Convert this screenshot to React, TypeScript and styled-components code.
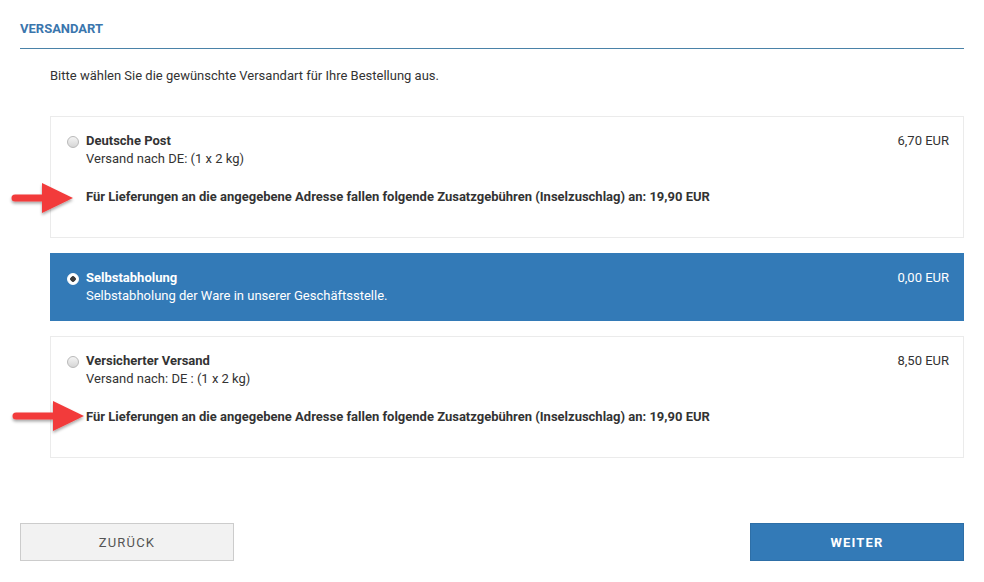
import React, { useState } from 'react';
import styled, { createGlobalStyle } from 'styled-components';

const GlobalStyle = createGlobalStyle`
  body {
    margin: 0;
    background: #fff;
    font-family: Roboto, "Liberation Sans", Arial, sans-serif;
    font-size: 13px;
    color: #333;
  }
`;

const Page = styled.div`
  padding: 20px 20px 0 20px;
  width: 944px;
`;

const Heading = styled.h2`
  margin: 0;
  font-size: 13px;
  font-weight: 700;
  text-transform: uppercase;
  color: #3a76ad;
  line-height: 18px;
  padding-bottom: 10px;
  border-bottom: 1px solid #4a82a8;
`;

const Content = styled.div`
  margin-left: 30px;
  padding-top: 18px;
  position: relative;
`;

const Intro = styled.p`
  margin: 0 0 31px 0;
  line-height: 18px;
`;

interface OptionProps {
  selected?: boolean;
}

const OptionCard = styled.div<OptionProps>`
  display: flex;
  align-items: flex-start;
  padding: 15px 14px ${(p) => (p.selected ? '15px' : '31px')} 16px;
  margin-bottom: 15px;
  background: ${(p) => (p.selected ? '#337ab7' : '#fff')};
  border: 1px solid ${(p) => (p.selected ? '#337ab7' : '#ebebeb')};
  color: ${(p) => (p.selected ? '#fff' : '#333')};
  line-height: 18px;
  cursor: pointer;
`;

const Radio = styled.span<OptionProps>`
  flex: none;
  width: 12px;
  height: 12px;
  margin: 4px 7px 0 0;
  border-radius: 50%;
  box-sizing: border-box;
  border: 1px solid ${(p) => (p.selected ? '#fff' : '#b9b9b9')};
  background: ${(p) =>
    p.selected
      ? 'radial-gradient(circle, #3c3c3c 0 2.5px, #fff 3px)'
      : 'linear-gradient(#f4f4f4, #d6d6d6)'};
`;

const OptionBody = styled.div`
  flex: 1;
`;

const Title = styled.div`
  font-weight: 700;
`;

const Notice = styled.div`
  font-weight: 700;
  margin-top: 20px;
`;

const Price = styled.div`
  flex: none;
`;

// red pointer arrows laid over the option list
const Arrow = styled.svg<{ left: number; top: number }>`
  position: absolute;
  left: ${(p) => p.left}px;
  top: ${(p) => p.top}px;
  overflow: visible;
  pointer-events: none;
`;

const Actions = styled.div`
  display: flex;
  justify-content: space-between;
  margin-top: 65px;
`;

const Button = styled.button<{ primary?: boolean }>`
  width: 214px;
  height: 38px;
  font-family: Roboto, "Liberation Sans", Arial, sans-serif;
  font-size: 13px;
  font-weight: ${(p) => (p.primary ? 700 : 400)};
  letter-spacing: 1.2px;
  text-transform: uppercase;
  cursor: pointer;
  background: ${(p) => (p.primary ? '#337ab7' : '#f2f2f2')};
  color: ${(p) => (p.primary ? '#fff' : '#555')};
  border: 1px solid ${(p) => (p.primary ? '#2e6fa7' : '#cccccc')};
`;

const RedArrow: React.FC<{ left: number; top: number; shaft: number }> = ({ left, top, shaft }) => (
  <Arrow left={left} top={top} width={shaft + 32} height={34}>
    <defs>
      <filter id={`sh${top}`} x="-20%" y="-30%" width="140%" height="160%">
        <feDropShadow dx="0" dy="2" stdDeviation="1.5" floodColor="#000" floodOpacity="0.35" />
      </filter>
    </defs>
    <g filter={`url(#sh${top})`}>
      <path
        d={`M3 12.5 H${shaft} V1 L${shaft + 31} 16 L${shaft} 31 V19.5 H3 a3.5 3.5 0 0 1 0 -7 Z`}
        fill="#f23b3b"
      />
    </g>
  </Arrow>
);

const options = [
  {
    id: 'post',
    title: 'Deutsche Post',
    detail: 'Versand nach DE: (1 x 2 kg)',
    price: '6,70 EUR',
    notice: true,
  },
  {
    id: 'pickup',
    title: 'Selbstabholung',
    detail: 'Selbstabholung der Ware in unserer Geschäftsstelle.',
    price: '0,00 EUR',
    notice: false,
  },
  {
    id: 'insured',
    title: 'Versicherter Versand',
    detail: 'Versand nach: DE : (1 x 2 kg)',
    price: '8,50 EUR',
    notice: true,
  },
];

const App: React.FC = () => {
  const [selected, setSelected] = useState('pickup');

  return (
    <>
      <GlobalStyle />
      <Page>
        <Heading>Versandart</Heading>
        <Content>
          <Intro>Bitte wählen Sie die gewünschte Versandart für Ihre Bestellung aus.</Intro>
          {options.map((o) => (
            <OptionCard key={o.id} selected={selected === o.id} onClick={() => setSelected(o.id)}>
              <Radio selected={selected === o.id} />
              <OptionBody>
                <Title>{o.title}</Title>
                <div>{o.detail}</div>
                {o.notice && (
                  <Notice>
                    Für Lieferungen an die angegebene Adresse fallen folgende Zusatzgebühren
                    (Inselzuschlag) an: 19,90 EUR
                  </Notice>
                )}
              </OptionBody>
              <Price>{o.price}</Price>
            </OptionCard>
          ))}
          <RedArrow left={-38} top={133} shaft={30} />
          <RedArrow left={-37} top={351} shaft={40} />
        </Content>
        <Actions>
          <Button>Zurück</Button>
          <Button primary>Weiter</Button>
        </Actions>
      </Page>
    </>
  );
};

export default App;
